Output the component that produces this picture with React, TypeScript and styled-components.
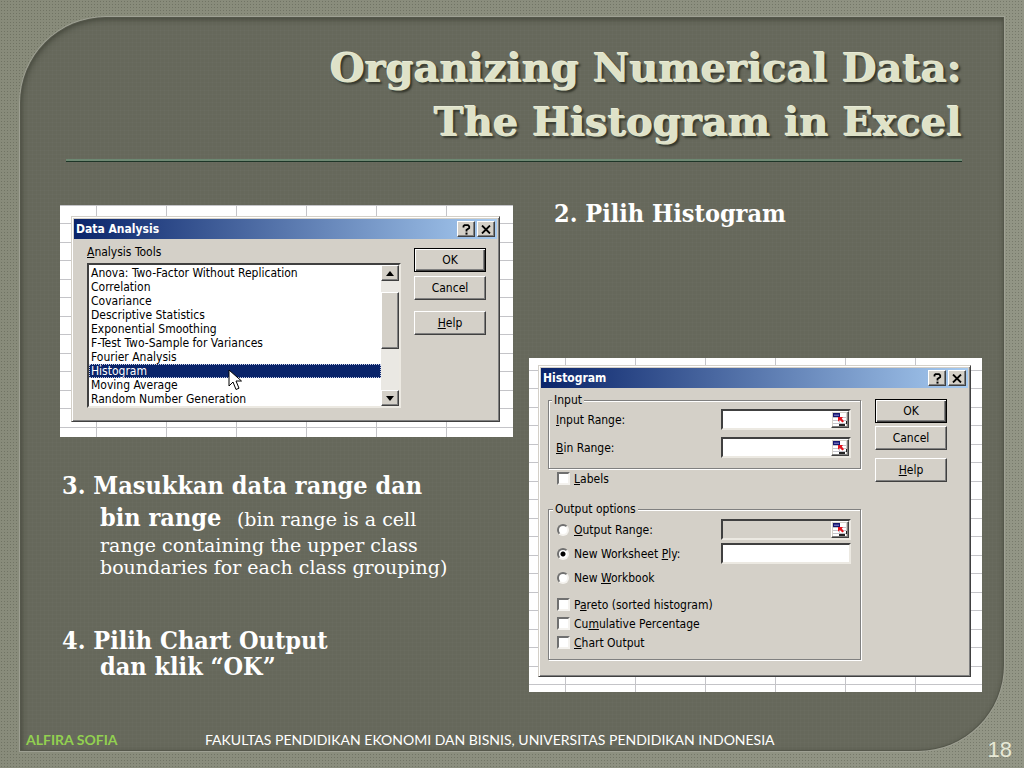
import React, { useState } from "react";
import styled, { createGlobalStyle, css } from "styled-components";

const face = "#d4d0c8";
const ui = '"DejaVu Sans Condensed", "DejaVu Sans", sans-serif';
const serif = '"DejaVu Serif Condensed", "DejaVu Serif", serif';

const Global = createGlobalStyle`
  *, *::before, *::after { box-sizing: border-box; }
  body { margin: 0; background: #84877a; }
`;

const Slide = styled.div`
  position: relative;
  display: flex;
  min-height: 100vh;
  padding: 17px 20px;
  background:
    radial-gradient(circle, rgba(58, 62, 46, 0.3) 0 1px, transparent 1px) 0 0 / 3px 3px,
    linear-gradient(100deg, #888b7a, #8b8e7e 50%, #939686);
`;

const Panel = styled.main`
  flex: 1;
  display: flex;
  flex-direction: column;
  border-radius: 86px 0;
  background:
    repeating-linear-gradient(0deg, rgba(255, 255, 255, 0.015) 0 1px, transparent 1px 4px),
    repeating-linear-gradient(90deg, rgba(255, 255, 255, 0.015) 0 1px, transparent 1px 4px),
    #66685b;
  box-shadow:
    0 0 0 1px #9fa194,
    inset 0 0 0 1px #55574b,
    inset 1px 2px 6px rgba(30, 32, 22, 0.55);
`;

const Header = styled.header`
  margin: 0 42px 0 46px;
  padding: 24px 0 10px;
  border-bottom: 2px solid #6d8872;
  box-shadow: 0 1px 0 #1d3527;
`;

const Title = styled.h1`
  margin: 0;
  font: bold 40px/54px "DejaVu Serif", serif;
  text-align: right;
  color: #dfe2c8;
  text-shadow: -1px -1px 0 #e8ebd8, 2px 2px 2px rgba(25, 27, 18, 0.65);
`;

const Columns = styled.div`
  display: grid;
  grid-template-columns: 1fr 1fr;
  gap: 16px;
  padding: 37px 22px 0 40px;
`;

const Column = styled.section<{ $top?: number }>`
  display: flex;
  flex-direction: column;
  padding-top: ${(p) => p.$top ?? 0}px;
`;

const Step = styled.p<{ $top?: number; $left?: number; $lead?: number }>`
  margin: ${(p) => p.$top ?? 0}px 0 0 ${(p) => p.$left ?? 0}px;
  padding-left: 40px;
  text-indent: -38px;
  font: bold 25px/${(p) => p.$lead ?? 32}px ${serif};
  color: #fff;
`;

const Note = styled.span`
  font: 19px/22px "DejaVu Serif", serif;
`;

const NoteBlock = styled(Note)`
  display: block;
  text-indent: 0;
`;

const Sheet = styled.div<{ $pad: string; $line: number; $top?: number }>`
  margin-top: ${(p) => p.$top ?? 0}px;
  padding: ${(p) => p.$pad};
  background:
    repeating-linear-gradient(90deg, transparent 0 36px, #c4c4c8 36px 37px, transparent 37px 70px),
    repeating-linear-gradient(180deg, #c4c4c8 0 1px, transparent 1px 18px, #c4c4c8 18px 19px, transparent 19px 37px)
      0 ${(p) => p.$line}px / 100% 370px,
    #fff;
`;

const Dialog = styled.div`
  position: relative;
  border: 1px solid;
  border-color: ${face} #404040 #404040 ${face};
  box-shadow: inset 1px 1px #fff, inset -1px -1px #808080;
  padding: 2px;
  background: ${face};
  font: 12px/14px ${ui};
  color: #000;
`;

const TitleBar = styled.div`
  display: flex;
  align-items: center;
  gap: 2px;
  height: 20px;
  padding: 0 2px;
  background: linear-gradient(90deg, #0a246a, #a6caf0);
`;

const Caption = styled.h2`
  flex: 1;
  margin: 0;
  font: bold 12px/20px ${ui};
  color: #fff;
`;

const raised = css`
  border: 1px solid;
  border-color: #fff #404040 #404040 #fff;
  box-shadow: inset -1px -1px #808080;
  background: ${face};
`;

const TinyButton = styled.button`
  ${raised}
  display: grid;
  place-items: center;
  width: 18px;
  height: 16px;
  padding: 0;
`;

const PushButton = styled.button<{ $main?: boolean; $top?: number }>`
  ${raised}
  height: 24px;
  margin-top: ${(p) => p.$top ?? 0}px;
  padding: 0;
  font: 12px/14px ${ui};
  color: #000;
  ${(p) => p.$main && css`
    border-color: #000;
    box-shadow: inset 1px 1px #fff, inset -1px -1px #404040, inset -2px -2px #808080;
  `}
`;

const Body = styled.div<{ $pad: string; $gap: number }>`
  display: flex;
  gap: ${(p) => p.$gap}px;
  padding: ${(p) => p.$pad};
`;

const Fields = styled.div`
  flex: 1;
  min-width: 0;
`;

const Actions = styled.div<{ $top: number }>`
  display: flex;
  flex-direction: column;
  width: 72px;
  padding-top: ${(p) => p.$top}px;
`;

const sunken = css`
  border: 2px solid;
  border-color: #404040 #ece9e2 #ece9e2 #404040;
`;

const ListFrame = styled.div`
  ${sunken}
  display: flex;
  height: 145px;
  margin-top: 4px;
  background: #fff;
`;

const List = styled.select`
  flex: 1;
  min-width: 0;
  padding: 1px 0 0;
  border: 0;
  outline: 0;
  overflow: hidden;
  background: #fff;
  font: 12px/14px ${ui};
  color: #000;

  option {
    height: 14px;
    min-height: 14px;
    padding: 0 2px;
    color: #000;
  }
  option:checked {
    color: #fff;
    background: #0a246a linear-gradient(#0a246a, #0a246a);
    outline: 1px dotted #c8cfe6;
    outline-offset: -1px;
  }
`;

const ScrollTrack = styled.div`
  display: flex;
  flex-direction: column;
  width: 18px;
  background: #eae8e3;
`;

const ScrollThumb = styled.div`
  ${raised}
  height: 57px;
  margin: 11px 0 auto;
`;

const Group = styled.fieldset<{ $pad: string; $top?: number }>`
  min-width: 0;
  margin: ${(p) => p.$top ?? 0}px 1px 0 0;
  padding: ${(p) => p.$pad};
  border: 1px solid #808080;
  box-shadow: 1px 1px #fff, inset 1px 1px #fff;
`;

const Legend = styled.legend`
  margin-left: -4px;
  padding: 0 2px;
  background: ${face};
  line-height: 14px;
`;

const Row = styled.div<{ $top?: number; $height?: number; $left?: number }>`
  display: flex;
  align-items: center;
  height: ${(p) => p.$height ?? 21}px;
  margin-top: ${(p) => p.$top ?? 0}px;
  padding-left: ${(p) => p.$left ?? 0}px;
`;

const Label = styled.label`
  flex: 1;
`;

const RangeBox = styled.div<{ $off?: boolean }>`
  ${sunken}
  display: flex;
  width: 130px;
  height: 21px;
  background: ${(p) => (p.$off ? face : "#fff")};
`;

const RangeInput = styled.input`
  flex: 1;
  min-width: 0;
  padding: 0 2px;
  border: 0;
  outline: 0;
  background: transparent;
  font: 12px/14px ${ui};
`;

const RefButton = styled.button`
  ${raised}
  width: 18px;
  height: 17px;
  padding: 0;
  svg { display: block; }
`;

const Tick = styled.input`
  appearance: none;
  ${sunken}
  width: 13px;
  height: 13px;
  margin: 0 4px 0 0;
  background: #fff;
  border-color: #707070 #f4f2ee #f4f2ee #707070;
  &[type="radio"] {
    border-radius: 50%;
    width: 12px;
    height: 12px;
    margin: 0 5px 0 0;
  }
  &[type="radio"]:checked {
    background: radial-gradient(circle, #000 0 2px, #fff 3px);
  }
`;

const Pointer = styled.svg`
  position: absolute;
  left: 156px;
  top: 152px;
`;

const Footer = styled.footer`
  display: flex;
  margin-top: auto;
  padding: 0 6px 1px;
  font: 14px/20px Lato, sans-serif;
  color: #fff;
`;

const Author = styled.strong`
  width: 179px;
  color: #92d050;
`;

const PageNumber = styled.span`
  position: absolute;
  right: 12px;
  bottom: 6px;
  font: 22px/24px "Liberation Sans", sans-serif;
  color: #e6e8d6;
`;

const WindowControls = () => (
  <>
    <TinyButton aria-label="Help">
      <svg width="9" height="11" viewBox="0 0 9 11">
        <path d="M1.5 3.5V2.2L2.5 1.2H6L7.2 2.3V4L4.5 6V7.4" fill="none" stroke="#000" strokeWidth="1.8" />
        <path d="M3.5 8.6h2v2h-2z" />
      </svg>
    </TinyButton>
    <TinyButton aria-label="Close">
      <svg width="10" height="9" viewBox="0 0 10 9">
        <path d="M1 .5l8 8M9 .5l-8 8" stroke="#000" strokeWidth="1.8" />
      </svg>
    </TinyButton>
  </>
);

const Arrow = ({ down }: { down?: boolean }) => (
  <svg width="8" height="5" viewBox="0 0 8 5">
    <path d={down ? "M0 0h8L4 5z" : "M0 5h8L4 0z"} />
  </svg>
);

const RefPicker = ({ name }: { name: string }) => (
  <RefButton aria-label={name}>
    <svg width="16" height="15" viewBox="0 0 16 15">
      <path d="M1 1h13v13H1z" fill="#fff" />
      <path d="M1 5.5h13M1 8.5h13M1 11.5h13M7.500 1v13" stroke="#c4c4cc" />
      <path d="M1 1h7v4H1z" fill="#15156e" />
      <path d="M2 3.200h5" stroke="#8f8fd8" />
      <path d="M6 5h5L9.800 6.500L12 9.200L10.300 10.600L8 8L6 9.800z" fill="#e3141e" />
      <path d="M7 12h6v2H7zM14 9h1v3h-1z" fill="#222" />
    </svg>
  </RefButton>
);

const DialogActions = ({ top, gaps }: { top: number; gaps: [number, number] }) => (
  <Actions $top={top}>
    <PushButton $main>OK</PushButton>
    <PushButton $top={gaps[0]}>Cancel</PushButton>
    <PushButton $top={gaps[1]}><span><u>H</u>elp</span></PushButton>
  </Actions>
);

const tools = [
  "Anova: Two-Factor Without Replication",
  "Correlation",
  "Covariance",
  "Descriptive Statistics",
  "Exponential Smoothing",
  "F-Test Two-Sample for Variances",
  "Fourier Analysis",
  "Histogram",
  "Moving Average",
  "Random Number Generation",
];

const AnalysisDialog = () => {
  const [tool, setTool] = useState("Histogram");
  return (
    <Dialog>
      <TitleBar>
        <Caption>Data Analysis</Caption>
        <WindowControls />
      </TitleBar>
      <Body $pad="6px 11px 11px 13px" $gap={13}>
        <Fields>
          <label htmlFor="tools"><u>A</u>nalysis Tools</label>
          <ListFrame>
            <List id="tools" size={10} value={tool} onChange={(e) => setTool(e.target.value)}>
              {tools.map((t) => <option key={t}>{t}</option>)}
            </List>
            <ScrollTrack>
              <TinyButton aria-label="Scroll up"><Arrow /></TinyButton>
              <ScrollThumb />
              <TinyButton aria-label="Scroll down"><Arrow down /></TinyButton>
            </ScrollTrack>
          </ListFrame>
        </Fields>
        <DialogActions top={3} gaps={[4, 11]} />
      </Body>
      <Pointer width="14" height="22" viewBox="0 0 14 22">
        <path d="M1 1v16l4-4 3 7.500 3-1.300-3-7.200h5.500z" fill="#fff" stroke="#000" />
      </Pointer>
    </Dialog>
  );
};

const HistogramDialog = () => (
  <Dialog>
    <TitleBar>
      <Caption>Histogram</Caption>
      <WindowControls />
    </TitleBar>
    <Body $pad="5px 21px 14px 7px" $gap={13}>
      <Fields>
        <Group $pad="2px 9px 10px 7px">
          <Legend>Input</Legend>
          <Row>
            <Label htmlFor="input-range"><u>I</u>nput Range:</Label>
            <RangeBox><RangeInput id="input-range" /><RefPicker name="Pick input range" /></RangeBox>
          </Row>
          <Row $top={7}>
            <Label htmlFor="bin-range"><u>B</u>in Range:</Label>
            <RangeBox><RangeInput id="bin-range" /><RefPicker name="Pick bin range" /></RangeBox>
          </Row>
        </Group>
        <Row $height={19} $left={9}>
          <Tick type="checkbox" id="labels" />
          <Label htmlFor="labels"><u>L</u>abels</Label>
        </Row>
        <Group $top={14} $pad="3px 9px 7px 8px">
          <Legend>Output options</Legend>
          <Row>
            <Tick type="radio" name="target" id="out-range" />
            <Label htmlFor="out-range"><u>O</u>utput Range:</Label>
            <RangeBox $off><RangeInput aria-label="Output range" disabled /><RefPicker name="Pick output range" /></RangeBox>
          </Row>
          <Row $top={3}>
            <Tick type="radio" name="target" id="out-sheet" defaultChecked />
            <Label htmlFor="out-sheet">New Worksheet <u>P</u>ly:</Label>
            <RangeBox><RangeInput aria-label="Worksheet name" /></RangeBox>
          </Row>
          <Row $top={3}>
            <Tick type="radio" name="target" id="out-book" />
            <Label htmlFor="out-book">New <u>W</u>orkbook</Label>
          </Row>
          <Row $top={7} $height={19}>
            <Tick type="checkbox" id="pareto" />
            <Label htmlFor="pareto">P<u>a</u>reto (sorted histogram)</Label>
          </Row>
          <Row $height={19}>
            <Tick type="checkbox" id="cumulative" />
            <Label htmlFor="cumulative">Cu<u>m</u>ulative Percentage</Label>
          </Row>
          <Row $height={19}>
            <Tick type="checkbox" id="chart" />
            <Label htmlFor="chart"><u>C</u>hart Output</Label>
          </Row>
        </Group>
      </Fields>
      <DialogActions top={6} gaps={[3, 8]} />
    </Body>
  </Dialog>
);

export default function App() {
  return (
    <Slide>
      <Global />
      <Panel>
        <Header>
          <Title>Organizing Numerical Data:<br />The Histogram in Excel</Title>
        </Header>
        <Columns>
          <Column $top={7}>
            <Sheet $pad="11px 13px 15px 11px" $line={0}><AnalysisDialog /></Sheet>
            <Step $top={33}>
              3. Masukkan data range dan<br />
              bin range&nbsp; <Note>(bin range is a cell</Note>
              <NoteBlock>range containing the upper class<br />boundaries for each class grouping)</NoteBlock>
            </Step>
            <Step $top={50} $lead={26}>
              4. Pilih Chart Output<br />dan klik “OK”
            </Step>
          </Column>
          <Column>
            <Step $left={23}>2. Pilih Histogram</Step>
            <Sheet $top={128} $pad="7px 11px 15px 9px" $line={12}><HistogramDialog /></Sheet>
          </Column>
        </Columns>
        <Footer>
          <Author>ALFIRA SOFIA</Author>
          <span>FAKULTAS PENDIDIKAN EKONOMI DAN BISNIS, UNIVERSITAS PENDIDIKAN INDONESIA</span>
        </Footer>
      </Panel>
      <PageNumber>18</PageNumber>
    </Slide>
  );
}
